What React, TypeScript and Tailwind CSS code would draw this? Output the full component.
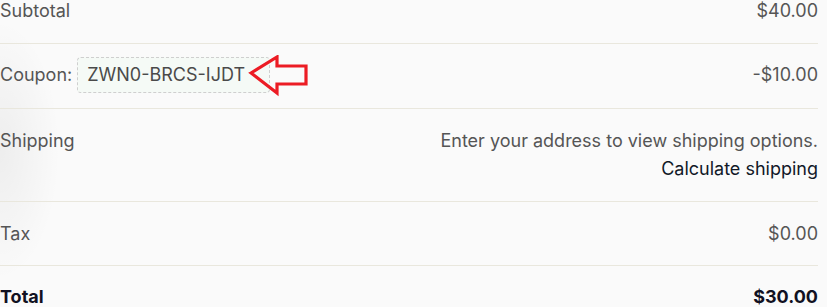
import React from "react";

const font = { fontFamily: "Inter, 'Noto Sans', sans-serif" };

export default function App() {
  return (
    <div
      className="relative w-[827px] h-[307px] overflow-hidden bg-[#fafafa] text-[18px] leading-[26px] text-[#555555]"
      style={font}
    >
      <div className="pointer-events-none absolute left-0 top-0 h-full w-[60px] bg-[radial-gradient(ellipse_60px_130px_at_0px_150px,rgba(0,0,0,0.05),rgba(0,0,0,0))]" />
      <div className="relative -mt-[21px] w-[818px]">
        <div className="flex h-[65px] items-center justify-between border-b border-[#e9e7dd]">
          <span>Subtotal</span>
          <span>$40.00</span>
        </div>
        <div className="relative flex h-[65px] items-center justify-between border-b border-[#e9e7dd] pb-[3px]">
          <div className="flex items-center gap-[5px]">
            <span>Coupon:</span>
            <span className="flex h-[36px] items-center rounded-[4px] border border-dashed border-[#cfcfcf] bg-[#f5faf6] pl-[9px] pr-[24px] text-[#4a4a4a]">
              ZWN0-BRCS-IJDT
            </span>
          </div>
          <span>-$10.00</span>
          <svg
            className="absolute left-[248px] top-[11px]"
            width="62"
            height="42"
            viewBox="0 0 62 42"
          >
            <polygon
              points="3,18 29,2 29,11 58,11 58,29 29,29 29,38"
              fill="none"
              stroke="#ec1c24"
              strokeWidth="3.2"
              strokeLinejoin="miter"
            />
          </svg>
        </div>
        <div className="flex h-[93px] justify-between pt-[19px] border-b border-[#e9e7dd]">
          <span>Shipping</span>
          <div className="flex flex-col items-end gap-[2px]">
            <span>Enter your address to view shipping options.</span>
            <span className="text-[#111827]">Calculate shipping</span>
          </div>
        </div>
        <div className="flex h-[64px] items-center justify-between border-b border-[#e9e7dd]">
          <span>Tax</span>
          <span>$0.00</span>
        </div>
        <div className="flex justify-between pt-[18px] font-bold text-[#111122]">
          <span>Total</span>
          <span>$30.00</span>
        </div>
      </div>
    </div>
  );
}
